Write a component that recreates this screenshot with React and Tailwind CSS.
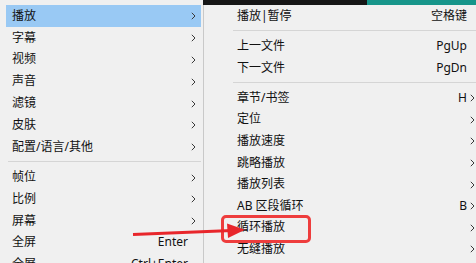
import React from "react";

const leftItems = [
  { label: "播放", sub: true, active: true },
  { label: "字幕", sub: true },
  { label: "视频", sub: true },
  { label: "声音", sub: true },
  { label: "滤镜", sub: true },
  { label: "皮肤", sub: true },
  { label: "配置/语言/其他", sub: true },
  { sep: true },
  { label: "帧位", sub: true },
  { label: "比例", sub: true },
  { label: "屏幕", sub: true },
  { label: "全屏", key: "Enter" },
  { label: "全屏", key: "Ctrl+Enter" },
];

const rightItems = [
  { label: "播放|暂停", key: "空格键" },
  { sep: true },
  { label: "上一文件", key: "PgUp" },
  { label: "下一文件", key: "PgDn" },
  { sep: true },
  { label: "章节/书签", key: "H", sub: true },
  { label: "定位", sub: true },
  { label: "播放速度", sub: true },
  { label: "跳略播放", sub: true },
  { label: "播放列表", sub: true },
  { label: "AB 区段循环", key: "B", sub: true },
  { label: "循环播放", sub: true },
  { label: "无缝播放", sub: true },
];

const Chevron = () => (
  <svg width="5" height="8" viewBox="0 0 5 8" className="mt-[1px]">
    <path d="M0.8 0.8 L4 4 L0.8 7.2" fill="none" stroke="#3a3a3a" strokeWidth="1" />
  </svg>
);

const MenuRow = ({ item, height, textPad, slotPad }) => (
  <div
    className={`flex items-center text-[12px] text-[#111] ${item.active ? "bg-[#99c9f4]" : ""}`}
    style={{ height }}
  >
    <span style={{ paddingLeft: textPad }} className="whitespace-nowrap">
      {item.label}
    </span>
    <span className="ml-auto whitespace-nowrap">{item.key}</span>
    <span className="w-[13px] shrink-0 flex" style={{ paddingLeft: slotPad }}>
      {item.sub && <Chevron />}
    </span>
  </div>
);

const Separator = ({ inset }) => (
  <div className="h-[8.6px] flex items-center" style={{ paddingLeft: inset }}>
    <div className="h-px w-full bg-[#d5d5d5]" />
  </div>
);

export default function App() {
  return (
    <div
      className="relative w-[476px] h-[263px] overflow-hidden bg-[#f0f0f0]"
      style={{ fontFamily: '"Noto Sans", "Noto Sans CJK SC", sans-serif' }}
    >
      <div className="flex h-full">
        <div className="w-[203px] shrink-0 pt-[5px] pl-[6px] pr-[2px]">
          {leftItems.map((item, i) =>
            item.sep ? (
              <Separator key={i} inset="2px" />
            ) : (
              <MenuRow key={i} item={item} height="21.8px" textPad="6px" slotPad="3px" />
            )
          )}
        </div>
        <div className="w-[290px] shrink-0 flex flex-col">
          <div className="h-[5px] flex shrink-0">
            <div className="w-[164px] bg-[#161616]" />
            <div className="flex-1 bg-[#17958a]" />
          </div>
          <div className="flex-1 border-l border-[#c9c9c9] pr-[13px]">
            {rightItems.map((item, i) =>
              item.sep ? (
                <Separator key={i} inset="29px" />
              ) : (
                <MenuRow key={i} item={item} height="21.6px" textPad="33px" slotPad="3px" />
              )
            )}
          </div>
        </div>
      </div>

      <div className="absolute left-[221px] top-[215px] w-[90px] h-[28px] border-[3px] border-[#ee3d3d] rounded-[5px]" />
      <svg className="absolute left-0 top-0" width="476" height="263">
        <line x1="133" y1="234.5" x2="232" y2="230.5" stroke="#e8262b" strokeWidth="3" />
        <polygon points="227,223.5 245,229.8 228,238" fill="#e8262b" />
      </svg>
    </div>
  );
}
